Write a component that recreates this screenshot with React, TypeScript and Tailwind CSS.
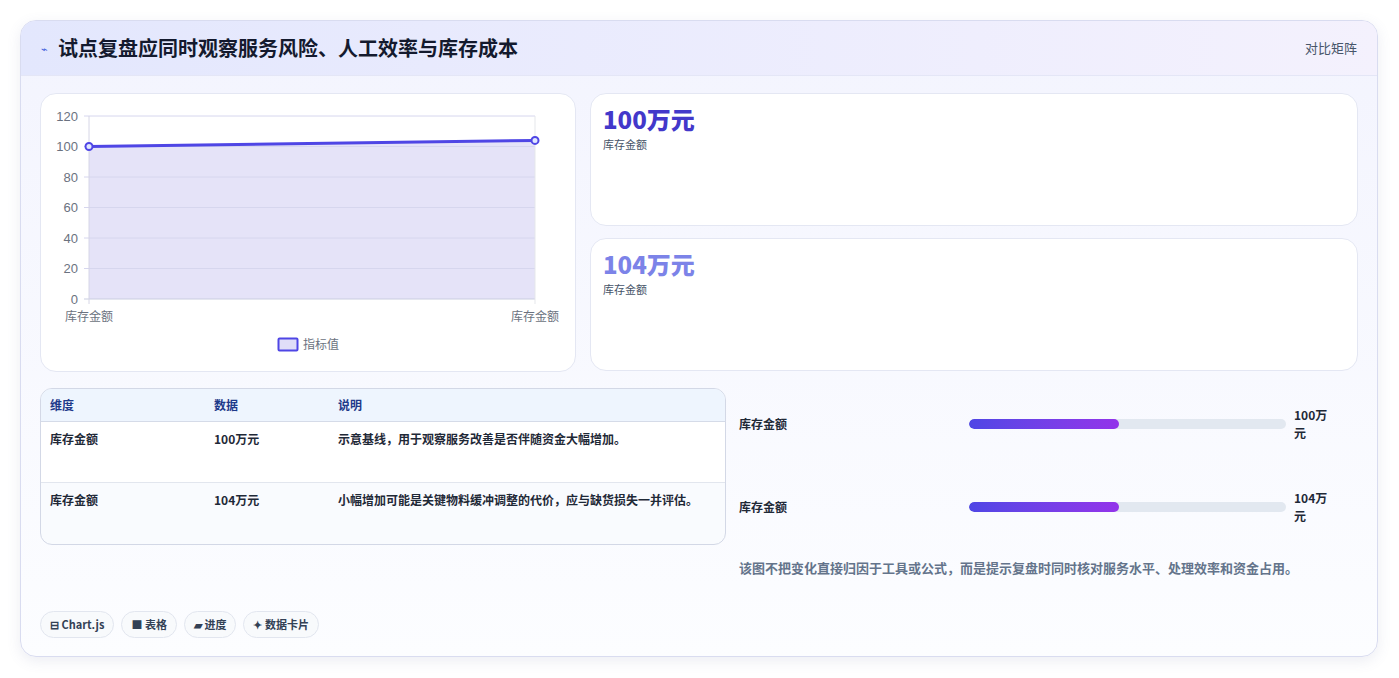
import React from "react";

const F = { fontFamily: '"Noto Sans CJK SC", "Noto Sans", sans-serif' };

function Chart() {
  const ox = 48, oy = 22, w = 446, h = 183;
  const y = (v: number) => oy + h - (v / 120) * h;
  const ticks = [0, 20, 40, 60, 80, 100, 120];
  return (
    <svg width="535" height="278" viewBox="0 0 535 278">
      <rect x={ox} y={oy} width={w} height={h} fill="#fff" />
      <polygon points={`${ox},${y(100)} ${ox + w},${y(104)} ${ox + w},${oy + h} ${ox},${oy + h}`} fill="#e5e3f8" />
      {ticks.map((t) => (
        <g key={t}>
          <line x1={ox - 5} x2={ox + w} y1={y(t)} y2={y(t)} stroke={t === 0 ? "#c9cde0" : "#d6d6ee"} strokeWidth="1" />
          <text x={ox - 11} y={y(t) + 4.5} textAnchor="end" fontSize="13" fill="#6b7280" fontFamily="Liberation Sans, sans-serif">{t}</text>
        </g>
      ))}
      <line x1={ox} x2={ox} y1={oy} y2={oy + h + 5} stroke="#d6d6e6" />
      <line x1={ox + w} x2={ox + w} y1={oy} y2={oy + h + 5} stroke="#e5e7eb" />
      <line x1={ox} y1={y(100)} x2={ox + w} y2={y(104)} stroke="#4f46e5" strokeWidth="3" />
      <circle cx={ox} cy={y(100)} r="3.5" fill="#e0e7ff" stroke="#4f46e5" strokeWidth="2" />
      <circle cx={ox + w} cy={y(104)} r="3.5" fill="#e0e7ff" stroke="#4f46e5" strokeWidth="2" />
      <text x={ox} y={227} textAnchor="middle" fontSize="12" fill="#6b7280" style={F}>库存金额</text>
      <text x={ox + w} y={227} textAnchor="middle" fontSize="12" fill="#6b7280" style={F}>库存金额</text>
      <rect x="237.5" y="244.5" width="19" height="12" fill="#e0def8" stroke="#4f46e5" strokeWidth="2" rx="1" />
      <text x="262" y="254.5" fontSize="12" fill="#6b7280" style={F}>指标值</text>
    </svg>
  );
}

export default function App() {
  const rows = [
    ["库存金额", "100万元", "示意基线，用于观察服务改善是否伴随资金大幅增加。"],
    ["库存金额", "104万元", "小幅增加可能是关键物料缓冲调整的代价，应与缺货损失一并评估。"],
  ];
  return (
    <div className="w-[1399px] h-[678px] bg-white pt-5 pl-5" style={F}>
      <div className="w-[1358px] h-[637px] rounded-2xl border border-[#d9dcf0] overflow-hidden bg-gradient-to-b from-[#f3f4fe] to-[#fcfdff] shadow-[0_4px_14px_rgba(100,110,160,0.12)]">
        <div className="h-[55px] flex items-center justify-between px-5 bg-gradient-to-r from-[#e3e7fd] to-[#f4f1fd] border-b border-[#e4e6f6]">
          <div className="flex items-center gap-2.5">
            <span className="text-[11px] text-[#3b5bdb]">⌁</span>
            <span className="text-[20px] font-bold text-[#141a2e]">试点复盘应同时观察服务风险、人工效率与库存成本</span>
          </div>
          <span className="text-[13px] text-[#475569]">对比矩阵</span>
        </div>
        <div className="px-[19px] pt-[17px]">
          <div className="flex gap-[14px]">
            <div className="w-[536px] h-[279px] bg-white rounded-2xl border border-[#e4e7f3] overflow-hidden"><Chart /></div>
            <div className="flex-1 flex flex-col gap-[12px]">
              {[["100万元", "text-[#4338ca]"], ["104万元", "text-[#7c83e8]"]].map(([v, c]) => (
                <div key={v} className="h-[133px] bg-white rounded-2xl border border-[#e4e7f3] px-3 pt-[8px]">
                  <div className={`text-[24px] font-extrabold leading-[34px] ${c}`}>{v}</div>
                  <div className="text-[11px] text-[#475569]">库存金额</div>
                </div>
              ))}
            </div>
          </div>
          <div className="flex gap-[13px] mt-4">
            <div className="w-[686px] h-[157px] rounded-xl border border-[#d3d8e6] overflow-hidden bg-[#f9fbfe] text-[12px]">
              <div className="h-[33px] flex items-center bg-[#eef5fe] border-b border-[#d5dbe8] font-bold text-[#1e3a8a] px-[9px]">
                <span className="w-[164px]">维度</span><span className="w-[124px]">数据</span><span>说明</span>
              </div>
              {rows.map((r, i) => (
                <div key={i} className={`h-[61px] flex px-[9px] pt-[8px] font-semibold text-[#1f2937] ${i === 0 ? "border-b border-[#e2e6ee] bg-white" : ""}`}>
                  <span className="w-[164px]">{r[0]}</span><span className="w-[124px]">{r[1]}</span><span>{r[2]}</span>
                </div>
              ))}
            </div>
            <div className="flex-1 pr-[19px]">
              {[["100万元"], ["104万元"]].map(([v], i) => (
                <div key={v} className={`flex items-center h-[20px] ${i === 0 ? "mt-[26px]" : "mt-[63px]"}`}>
                  <span className="w-[231px] text-[12px] font-semibold text-[#1f2937]">库存金额</span>
                  <div className="w-[319px] h-[10px] rounded-full bg-[#e2e8f0] overflow-hidden">
                    <div className="h-full w-[150px] rounded-full bg-gradient-to-r from-[#4f46e5] to-[#9333ea]" />
                  </div>
                  <span className="ml-[8px] text-[12px] font-bold text-[#1f2937]">{v}</span>
                </div>
              ))}
              <div className="mt-[41px] text-[13px] font-semibold text-[#64748b]">该图不把变化直接归因于工具或公式，而是提示复盘时同时核对服务水平、处理效率和资金占用。</div>
            </div>
          </div>
          <div className="flex gap-[7px] mt-[33px]">
            {["⊟ Chart.js", "■ 表格", "▰ 进度", "✦ 数据卡片"].map((t) => (
              <span key={t} className="h-[27px] px-[9px] flex items-center rounded-full border border-[#e2e6ef] bg-[#f8fafc] text-[11px] font-bold text-[#334155]">{t}</span>
            ))}
          </div>
        </div>
      </div>
    </div>
  );
}
